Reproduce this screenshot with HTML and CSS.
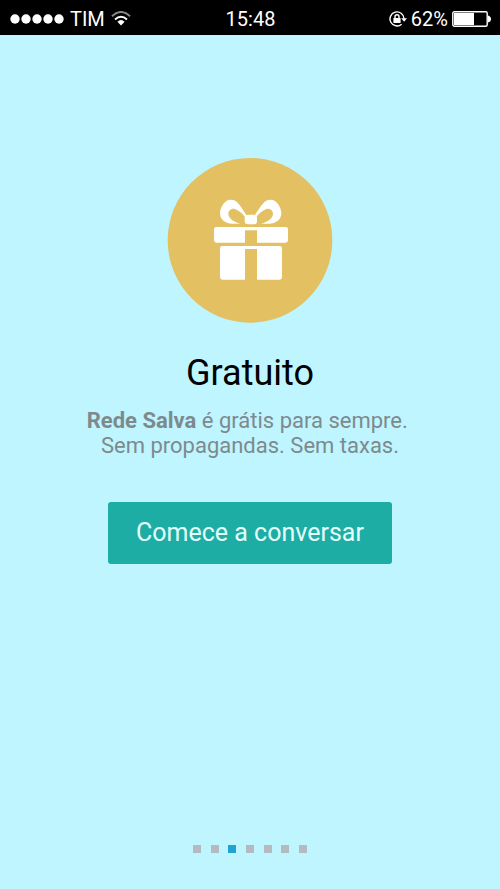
FILE: index.html
```html
<!DOCTYPE html>
<html lang="pt-BR">
<head>
<meta charset="utf-8">
<meta name="viewport" content="width=device-width, initial-scale=1">
<title>Rede Salva</title>
<link rel="stylesheet" href="styles.css">
</head>
<body>
<header class="status">
  <div class="status-side">
    <svg class="signal" viewBox="0 0 54 10" aria-hidden="true"><circle cx="5" cy="5" r="4.7"/><circle cx="16" cy="5" r="4.7"/><circle cx="27" cy="5" r="4.7"/><circle cx="38" cy="5" r="4.7"/><circle cx="49" cy="5" r="4.7"/></svg>
    <span class="carrier">TIM</span>
    <svg class="wifi" viewBox="0 0 20 15" aria-hidden="true">
      <path class="faint" d="M1 5.2Q10-3.2 19 5.2"/>
      <path d="M4 8.4Q10 3 16 8.4"/>
      <path class="solid" d="M6.4 10.8Q10 7.4 13.6 10.8L10 14.4Z"/>
    </svg>
  </div>
  <time class="clock">15:48</time>
  <div class="status-side status-end">
    <svg class="lock" viewBox="0 0 18 16" aria-hidden="true">
      <path class="ring" d="M12.6 13.2A7 7 0 1 1 15 7.6"/>
      <path d="M12.2 7.2H18L15.1 10.8Z"/>
      <rect x="4.4" y="7" width="7.2" height="5" rx=".6"/>
      <path class="ring" d="M6 7.2V5.8a2 2 0 0 1 4 0V7.2"/>
    </svg>
    <span class="percent">62%</span>
    <svg class="battery" viewBox="0 0 39 16" aria-hidden="true">
      <rect class="case" x=".8" y=".8" width="34.4" height="14.4" rx="1.5"/>
      <rect x="2" y="2" width="20" height="12"/>
      <path d="M36 4.5Q39 5.5 39 8T36 11.5Z"/>
    </svg>
  </div>
</header>
<main class="slide">
  <svg class="gift" viewBox="21 24 498 498" aria-hidden="true">
    <circle class="disc" cx="270" cy="271" r="247"/>
    <path d="M259 195C246 176 235 156 222 151Q208 147 198 154C187 163 180 178 180 190C180 210 198 221 216 221H242C224 217 205 206 205 191C205 181 217 173 226 178C237 182 246 190 255 201Z"/>
    <path d="M285 195C298 176 309 156 322 151Q336 147 346 154C357 163 364 178 364 190C364 210 346 221 328 221H302C320 217 339 206 339 191C339 181 327 173 318 178C307 182 298 190 289 201Z"/>
    <rect x="254" y="194" width="37" height="29" rx="10"/>
    <path d="M168 231H377Q384 231 384 238V271Q384 278 377 278H291V241H255V278H169Q162 278 162 271V238Q162 231 169 231Z"/>
    <path d="M187 288H359Q366 288 366 295V382Q366 389 359 389H291V297H255V389H187Q180 389 180 382V295Q180 288 187 288Z"/>
  </svg>
  <h1 class="title">Gratuito</h1>
  <p class="text"><strong>Rede Salva</strong> é grátis para sempre.&nbsp;<br>Sem propagandas. Sem taxas.</p>
  <button class="start" type="button">Comece a conversar</button>
</main>
<nav class="pages" aria-label="Páginas">
  <span class="page"></span><span class="page"></span><span class="page current"></span><span class="page"></span><span class="page"></span><span class="page"></span><span class="page"></span>
</nav>
</body>
</html>
```
FILE: styles.css
```css
* { box-sizing: border-box; }
body {
  margin: 0;
  min-height: 100vh;
  display: flex;
  flex-direction: column;
  background: #bff5ff;
  font-family: Roboto, sans-serif;
}
.status {
  height: 35px;
  padding: 2px 9px 0 10px;
  display: grid;
  grid-template-columns: 1fr auto 1fr;
  align-items: center;
  background: #000;
  color: #fff;
  font-size: 20px;
  line-height: 24px;
}
.status svg { fill: #fff; flex: none; }
.status-side { display: flex; align-items: center; gap: 6px; }
.status-end { justify-content: flex-end; gap: 4px; }
.signal { width: 54px; height: 10px; }
.wifi { width: 20px; height: 15px; }
.wifi path { fill: none; stroke: #fff; stroke-width: 2; }
.wifi .faint { stroke: #888; }
.wifi .solid { fill: #fff; stroke: none; }
.lock { width: 18px; height: 16px; }
.lock .ring { fill: none; stroke: #fff; stroke-width: 1.4; }
.battery { width: 39px; height: 16px; }
.battery .case { fill: none; stroke: #fff; stroke-width: 1.4; }
.slide {
  flex: 1;
  padding: 123px 24px 24px;
  display: flex;
  flex-direction: column;
  align-items: center;
  text-align: center;
}
.gift { width: 166px; height: 166px; fill: #fff; }
.gift .disc { fill: #e3c061; }
.title {
  margin: 27px 0 0;
  color: #000;
  font-size: 36px;
  font-weight: 400;
  line-height: 44px;
}
.text {
  margin: 13px 0 0;
  color: #7d8a8d;
  font-size: 22px;
  line-height: 25px;
}
.start {
  margin-top: 44px;
  padding: 16px 28px;
  border: 0;
  border-radius: 3px;
  background: #1dada4;
  color: #e2fffc;
  font-family: inherit;
  font-size: 25px;
  line-height: 30px;
}
.pages {
  width: 114px;
  margin: 0 auto;
  padding-bottom: 36px;
  display: flex;
  justify-content: space-between;
}
.page { width: 8px; height: 8px; background: #b4babf; }
.page.current { background: #22a2d3; }
```
